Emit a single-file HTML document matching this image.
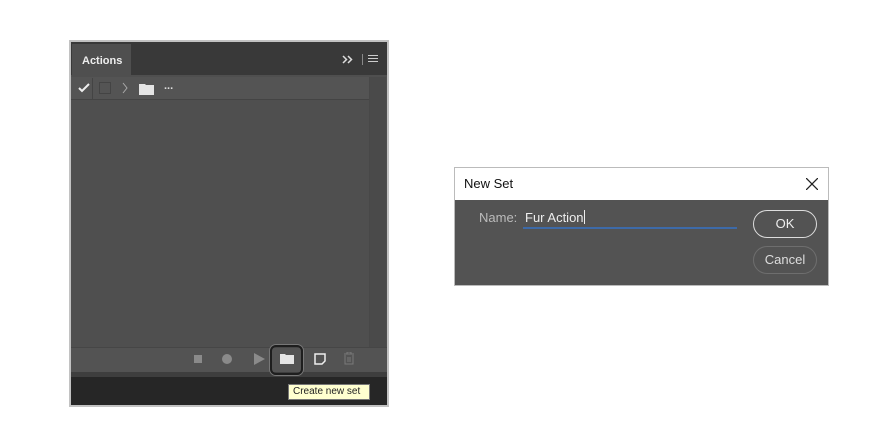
<!DOCTYPE html>
<html><head><meta charset="utf-8"><style>
body{margin:0;width:875px;height:445px;background:#fff;position:relative;overflow:hidden;font-family:"Liberation Sans",sans-serif}
.a{position:absolute}
</style></head><body>
<!-- panel -->
<div class="a" style="left:69px;top:40px;width:320px;height:367px;background:#999;opacity:.6"></div>
<div class="a" style="left:71px;top:42px;width:316px;height:363px;background:#4f4f4f">
  <div class="a" style="left:0;top:0;width:316px;height:33px;background:#393939"></div>
  <div class="a" style="left:1px;top:2px;width:59px;height:32px;background:#4f4f4f;color:#eee;font-weight:bold;font-size:11px;line-height:34px;padding-left:10px;box-sizing:border-box">Actions</div>
  <svg class="a" style="left:271px;top:13px" width="12" height="9"><path d="M1 1 L4.5 4.5 L1 8 M6 1 L9.5 4.5 L6 8" stroke="#ddd" stroke-width="1.5" fill="none"/></svg>
  <div class="a" style="left:291px;top:12px;width:1px;height:11px;background:#888"></div>
  <div class="a" style="left:297px;top:13px;width:10px;height:1px;background:#ccc;box-shadow:0 3px 0 #ccc,0 6px 0 #ccc"></div>
  <!-- row -->
  <div class="a" style="left:0;top:35px;width:300px;height:22px;background:#545454;border-bottom:1px solid #444"></div>
  <div class="a" style="left:21px;top:36px;width:1px;height:22px;background:#444"></div>
  <svg class="a" style="left:7px;top:41px" width="12" height="10"><path d="M1 5 L4 8 L11 1" stroke="#eee" stroke-width="2" fill="none"/></svg>
  <div class="a" style="left:28px;top:40px;width:12px;height:12px;border:1px solid #444;box-sizing:border-box"></div>
  <svg class="a" style="left:51px;top:40px" width="6" height="12"><path d="M1 1 L5 6 L1 11" stroke="#aaa" fill="none"/></svg>
  <svg class="a" style="left:68px;top:41px" width="15" height="12"><path d="M0 1 H6 L7 2 H15 V12 H0Z" fill="#e4e4e4"/></svg>
  <div class="a" style="left:93px;top:38px;color:#ddd;font-size:11px;font-weight:bold">...</div>
  <!-- scrollbar -->
  <div class="a" style="left:298px;top:35px;width:16px;height:270px;background:#4a4a4a;border-left:1px solid #484848"></div>
  <!-- toolbar -->
  <div class="a" style="left:0;top:305px;width:316px;height:25px;background:#535353;border-top:1px solid #464646"></div>
  <div class="a" style="left:0;top:330px;width:316px;height:5px;background:#3e3e3e"></div>
  <div class="a" style="left:123px;top:313px;width:8px;height:8px;background:#8a8a8a"></div>
  <div class="a" style="left:151px;top:312px;width:10px;height:10px;border-radius:50%;background:#8a8a8a"></div>
  <svg class="a" style="left:183px;top:311px" width="11" height="12"><path d="M0 0 L11 6 L0 12Z" fill="#8a8a8a"/></svg>
  <div class="a" style="left:199px;top:303px;width:33px;height:30px;border:2px solid #1e1e1e;border-radius:6px;box-sizing:border-box;box-shadow:0 0 0 1px #777"></div>
  <svg class="a" style="left:209px;top:311px" width="14" height="11"><path d="M0 1 H5 L6 2 H14 V11 H0Z" fill="#e4e4e4"/></svg>
  <svg class="a" style="left:243px;top:311px" width="12" height="12"><path d="M1 1 H11 V8 L8 11 H1Z" stroke="#eee" stroke-width="1.5" fill="none"/></svg>
  <svg class="a" style="left:272px;top:310px" width="12" height="13"><path d="M1 2 H11 M4 2 V0 H8 V2 M2 3 V12 H10 V3 M5 5 V10 M7 5 V10" stroke="#7a7a7a" fill="none"/></svg>
  <div class="a" style="left:0;top:335px;width:316px;height:28px;background:#262626"></div>
  <div class="a" style="left:217px;top:342px;width:82px;height:16px;background:#ffffd0;border:1px solid #777;box-sizing:border-box;font-size:10px;line-height:14px;color:#222;padding-left:4px">Create new set</div>
</div>
<!-- dialog -->
<div class="a" style="left:454px;top:167px;width:375px;height:119px;background:#bbb"></div>
<div class="a" style="left:455px;top:168px;width:373px;height:117px;background:#535353">
  <div class="a" style="left:0;top:0;width:373px;height:32px;background:#fff;font-size:13px;color:#111;line-height:32px;padding-left:9px;box-sizing:border-box">New Set</div>
  <svg class="a" style="left:351px;top:10px" width="12" height="12"><path d="M0 0 L12 12 M12 0 L0 12" stroke="#222" stroke-width="1.3"/></svg>
  <div class="a" style="left:24px;top:42px;font-size:13px;color:#bbb">Name:</div>
  <div class="a" style="left:70px;top:42px;font-size:13px;color:#eee">Fur Action<span style="display:inline-block;width:1px;height:14px;background:#eee;vertical-align:-2px"></span></div>
  <div class="a" style="left:68px;top:59px;width:214px;height:2px;background:#3d6aa8"></div>
  <div class="a" style="left:298px;top:42px;width:64px;height:28px;border:1.5px solid #ddd;border-radius:14px;box-sizing:border-box;color:#eee;font-size:13px;text-align:center;line-height:26px">OK</div>
  <div class="a" style="left:298px;top:78px;width:64px;height:28px;border:1.5px solid #6e6e6e;border-radius:14px;box-sizing:border-box;color:#ddd;font-size:13px;text-align:center;line-height:26px">Cancel</div>
</div>
</body></html>
